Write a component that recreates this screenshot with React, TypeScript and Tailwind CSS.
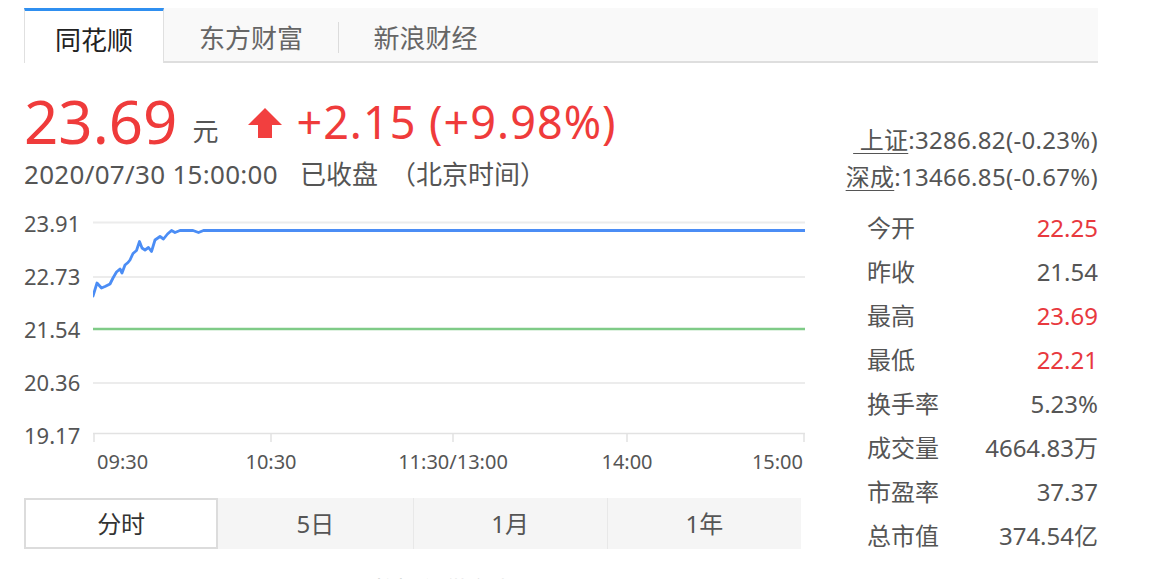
import React from 'react';

const sourceTabs = ['同花顺', '东方财富', '新浪财经'];

const stats = [
  { label: '今开', value: '22.25', up: true },
  { label: '昨收', value: '21.54' },
  { label: '最高', value: '23.69', up: true },
  { label: '最低', value: '22.21', up: true },
  { label: '换手率', value: '5.23%' },
  { label: '成交量', value: '4664.83万' },
  { label: '市盈率', value: '37.37' },
  { label: '总市值', value: '374.54亿' },
];

const yTicks = ['23.91', '22.73', '21.54', '20.36', '19.17'];
const periods = ['分时', '5日', '1月', '1年'];

// intraday price, page coordinates (x, y)
const pricePoints: [number, number][] = [
  [93, 296], [97, 283], [101.5, 288], [105, 286.5], [110, 284], [113, 278], [116.5, 272],
  [120, 269], [122, 273], [125, 265], [128, 262.5], [130, 260], [133, 253.5], [136.5, 250.5],
  [139.5, 241.5], [142, 248], [145, 250], [148.5, 247.5], [151.5, 251.5], [155, 240],
  [160, 236.5], [163.5, 239], [167.5, 234], [171.5, 230.5], [175, 232.5], [180, 230.5],
  [193, 230.5], [198.5, 232.5], [203.5, 230.5], [805, 230.5],
];

const IntradayChart: React.FC = () => {
  const d = pricePoints.map(([x, y], i) => `${i ? 'L' : 'M'}${x} ${y}`).join(' ');
  return (
    <svg width={712} height={250} viewBox="93 197 712 250" className="block shrink-0">
      <line x1={93} x2={805} y1={222.5} y2={222.5} stroke="#ececec" strokeWidth={2} />
      <line x1={93} x2={805} y1={277} y2={277} stroke="#ececec" strokeWidth={2} />
      <line x1={93} x2={805} y1={383} y2={383} stroke="#ececec" strokeWidth={2} />
      <line x1={93} x2={805} y1={329} y2={329} stroke="#7fcb87" strokeWidth={2.5} />
      <line x1={93} x2={805} y1={433.5} y2={433.5} stroke="#e2e2e2" strokeWidth={1.5} />
      {[94, 271, 453, 627, 804].map((x) => (
        <line key={x} x1={x} x2={x} y1={433} y2={442} stroke="#e2e2e2" strokeWidth={1.5} />
      ))}
      <path d={d} fill="none" stroke="#4b8df5" strokeWidth={2.8} strokeLinejoin="round" strokeLinecap="round" />
    </svg>
  );
};

const App: React.FC = () => {
  return (
    <div className="w-[1149px] h-[579px] overflow-hidden bg-white pl-[24px] pt-[8px] font-['Noto_Sans','Noto_Sans_CJK_SC',sans-serif]">
      {/* source tabs */}
      <div className="flex items-stretch w-[1074px] h-[55px] bg-[#f9f9f9] border-b-2 border-[#dedede]">
        <div className="-mb-[2px] w-[140px] flex items-center justify-center pt-[6px] bg-white border-t-[3px] border-t-[#2f8ff0] border-x border-x-[#e0e0e0] text-[26px] text-[#222]">
          {sourceTabs[0]}
        </div>
        <div className="w-[174px] flex items-center justify-center pt-[8px] text-[26px] text-[#666]">
          {sourceTabs[1]}
        </div>
        <div className="self-center mt-[6px] w-px h-[31px] bg-[#dcdcdc]" />
        <div className="w-[173px] flex items-center justify-center pt-[8px] text-[26px] text-[#666]">
          {sourceTabs[2]}
        </div>
      </div>

      <div className="flex">
        {/* left: price + chart */}
        <div className="w-[781px]">
          <div className="mt-[26px] h-[64px] flex items-center">
            <span className="text-[60px] leading-none text-[#ef3b3b]">23.69</span>
            <span className="ml-[15px] mt-[20px] text-[26px] leading-none text-[#555]">元</span>
            <svg width={34} height={30} viewBox="0 0 34 30" className="ml-[30px] mt-[4px]">
              <polygon points="17,0 34,17 24,17 24,30 10,30 10,17 0,17" fill="#f23f3f" />
            </svg>
            <span className="ml-[14px] text-[45px] leading-none tracking-[1px] text-[#ef3b3b]">+2.15 (+9.98%)</span>
          </div>
          <div className="mt-[6px] h-[30px] flex items-center text-[26px] text-[#555]">
            <span className="tracking-[0.3px]">2020/07/30 15:00:00</span>
            <span className="ml-[22px]">已收盘</span>
            <span className="ml-[12px]">（北京时间）</span>
          </div>

          <div className="mt-[8px] flex h-[250px]">
            <div className="w-[69px] h-[250px] flex flex-col">
              {yTicks.map((t) => (
                <div key={t} className="shrink-0 h-[53px] flex items-center text-[22px] text-[#555]">
                  {t}
                </div>
              ))}
            </div>
            <IntradayChart />
          </div>
          <div className="relative ml-[69px] w-[712px] h-[30px] text-[20px] leading-[30px] text-[#555]">
            <span className="absolute left-[4px] top-0">09:30</span>
            <span className="absolute left-[178px] top-0 -translate-x-1/2">10:30</span>
            <span className="absolute left-[360px] top-0 -translate-x-1/2">11:30/13:00</span>
            <span className="absolute left-[534px] top-0 -translate-x-1/2">14:00</span>
            <span className="absolute right-[2px] top-0">15:00</span>
          </div>

          <div className="mt-[21px] grid grid-cols-4 w-[777px] h-[51px] bg-[#f5f5f5] text-[24px]">
            {periods.map((p, i) => (
              <div
                key={p}
                className={
                  i === 0
                    ? 'flex items-center justify-center bg-white border-2 border-[#dcdcdc] text-[#333]'
                    : i === 1
                      ? 'flex items-center justify-center text-[#555]'
                      : 'flex items-center justify-center border-l border-[#e8e8e8] text-[#555]'
                }
              >
                {p}
              </div>
            ))}
          </div>
          <div className="mt-[29px] ml-[348px] text-[24px] leading-[24px] text-[#bbb]">数据仅供参考</div>
        </div>

        {/* right: indices + stats */}
        <div className="ml-[29px] w-[264px]">
          <div className="mt-[58px] text-right text-[24px] leading-[37px] tracking-[0.3px] whitespace-nowrap text-[#555]">
            <div>
              <span className="underline decoration-1 underline-offset-[4px]">{'\u00a0上证'}</span>:3286.82(-0.23%)
            </div>
            <div>
              <span className="underline decoration-1 underline-offset-[4px]">深成</span>:13466.85(-0.67%)
            </div>
          </div>
          <div className="mt-[11px] pl-[33px]">
            {stats.map((s) => (
              <div key={s.label} className="h-[44px] flex items-center justify-between text-[24px]">
                <span className="text-[#555]">{s.label}</span>
                <span className={s.up ? 'text-[#e8393e]' : 'text-[#555]'}>{s.value}</span>
              </div>
            ))}
          </div>
        </div>
      </div>
    </div>
  );
};

export default App;
